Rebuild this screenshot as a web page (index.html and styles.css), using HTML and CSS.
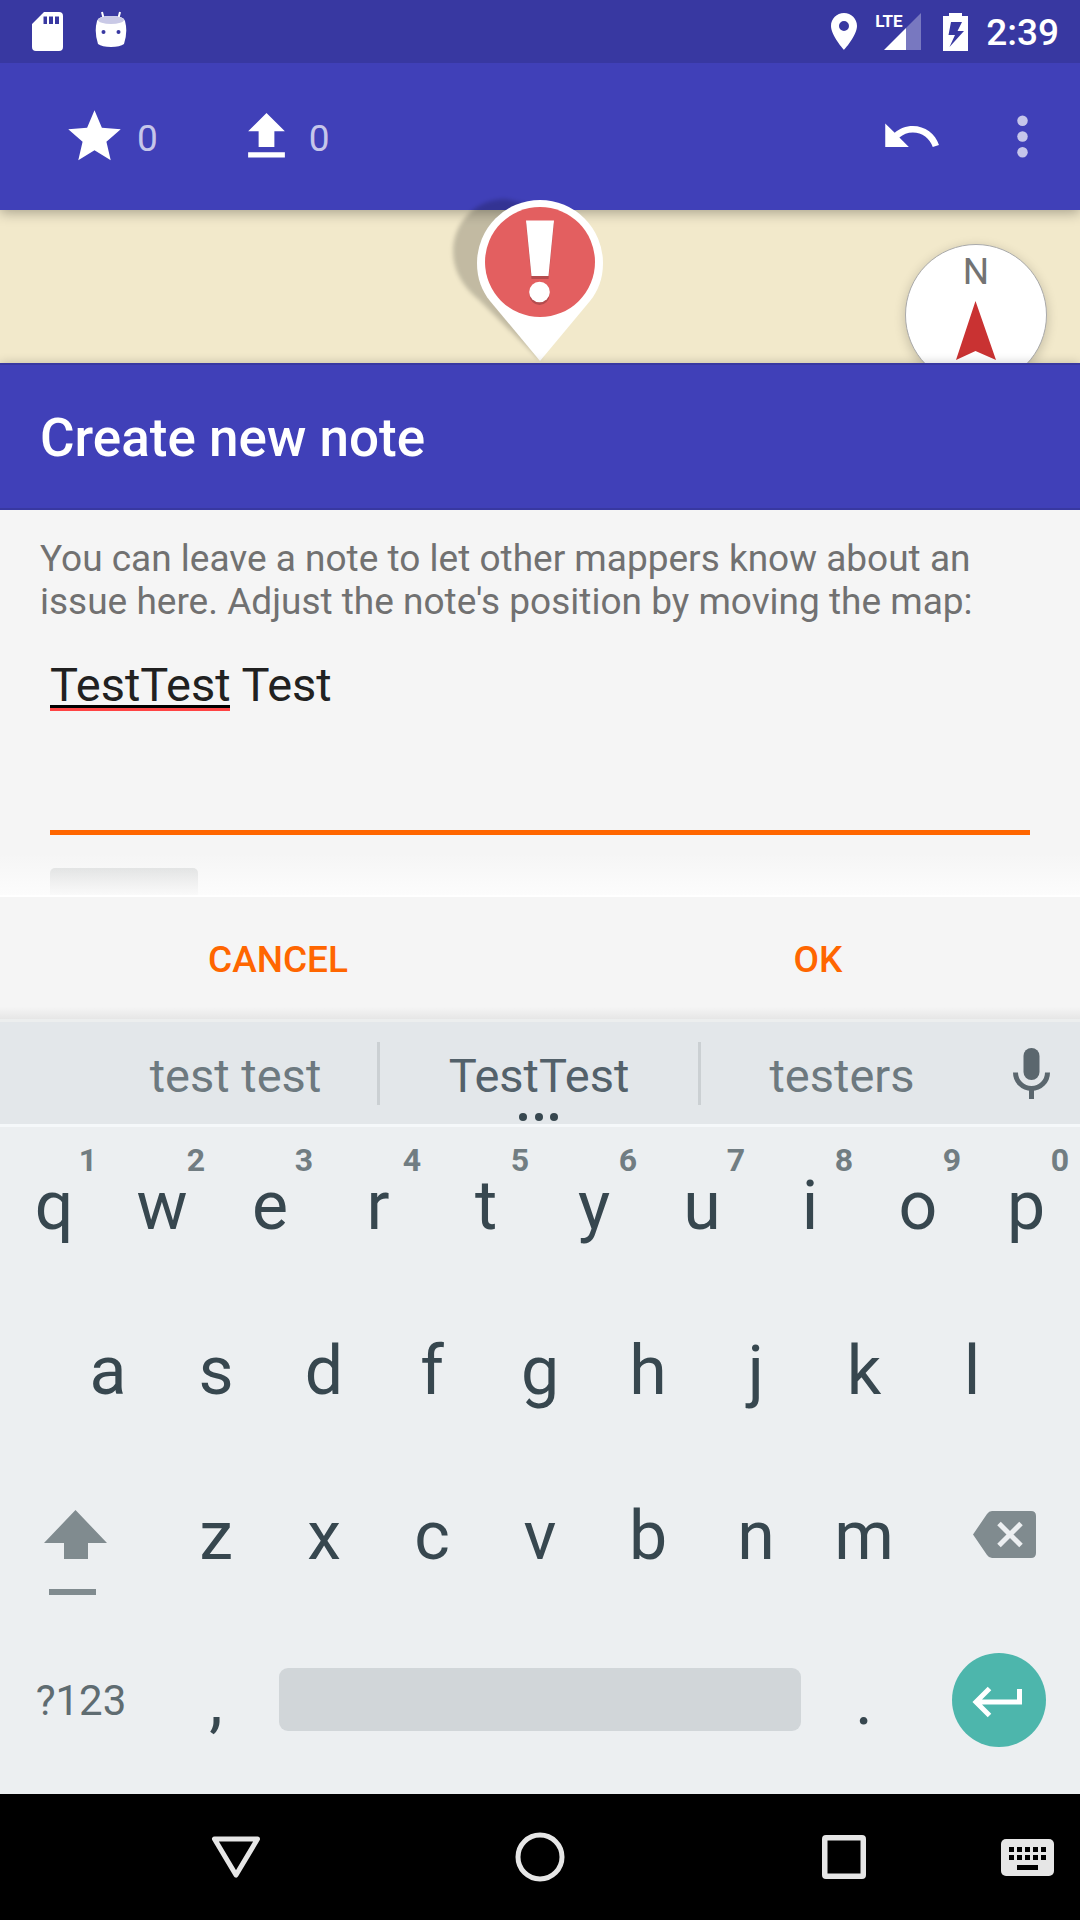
FILE: index.html
```html
<!DOCTYPE html>
<html lang="en">
<head>
<meta charset="utf-8">
<meta name="viewport" content="width=device-width, initial-scale=1">
<title>Create new note</title>
<link rel="stylesheet" href="styles.css">
</head>
<body>
<div class="status">
  <div class="status-group status-left">
    <svg width="31" height="39" viewBox="0 0 31 39"><path fill="#fff" fill-rule="evenodd" d="M12 0H27Q31 0 31 4V35Q31 39 27 39H4Q0 39 0 35V12ZM11.500 4.500V12H15V4.500ZM17 4.500V12H21V4.500ZM23 4.500V12H27V4.500Z"/></svg>
    <svg width="32" height="37" viewBox="0 0 32 37"><path d="M7 1 9 9M25 1 23 9" stroke="#fff" stroke-width="2"/><path fill="#fff" d="M2 10Q3 5 16 5T30 10Q33 21 29 33Q25 36 16 36T3 33Q-1 21 2 10Z"/><ellipse cx="16" cy="9" rx="13" ry="4" fill="#c9c9e6"/><circle cx="8.500" cy="21" r="2" fill="#3838a1"/><circle cx="23.500" cy="21" r="2" fill="#3838a1"/></svg>
  </div>
  <div class="status-group status-right">
    <svg width="26" height="37" viewBox="0 0 26 37"><path fill="#fff" fill-rule="evenodd" d="M13 0C5.800 0 0 5.800 0 13C0 22.500 13 37 13 37S26 22.500 26 13C26 5.800 20.200 0 13 0ZM13 8A5 5 0 1 1 13 18A5 5 0 1 1 13 8Z"/></svg>
    <div class="signal"><span class="lte">LTE</span><svg width="37" height="37" viewBox="0 0 37 37"><path fill="#7878c0" d="M37 0V37H22V15Z"/><path fill="#fff" d="M0 37 22 15V37Z"/></svg></div>
    <svg width="25" height="38" viewBox="0 0 25 38"><path fill="#fff" fill-rule="evenodd" d="M6 0H19V3H25V38H0V3H6ZM8 9 5.500 22H12L6.500 34 21 18H14.500L19 9Z"/></svg>
    <span class="clock">2:39</span>
  </div>
</div>

<header class="toolbar">
  <button class="counter" aria-label="Quests"><svg class="icon" viewBox="0 0 24 24"><path fill="#fff" d="M12 17.270 18.180 21l-1.640-7.030L22 9.240l-7.190-.610L12 2 9.190 8.630 2 9.240l5.460 4.730L5.820 21z"/></svg><span>0</span></button>
  <button class="counter" aria-label="Upload"><svg class="icon" viewBox="0 0 24 24"><path fill="#fff" d="M9 16h6v-6h4l-7-7-7 7h4zm-4 2h14v2H5z"/></svg><span>0</span></button>
  <div class="toolbar-actions">
    <button aria-label="Undo"><svg class="icon" viewBox="0 0 24 24"><path fill="#fff" d="M12.500 8c-2.650 0-5.050.990-6.900 2.600L2 7v9h9l-3.620-3.620c1.390-1.160 3.160-1.880 5.120-1.880 3.540 0 6.550 2.310 7.600 5.500l2.370-.780C21.080 11.030 17.150 8 12.500 8z"/></svg></button>
    <button aria-label="More"><svg class="icon" viewBox="0 0 24 24"><g fill="#c6c6ea"><circle cx="12" cy="6" r="2"/><circle cx="12" cy="12" r="2"/><circle cx="12" cy="18" r="2"/></g></svg></button>
  </div>
</header>

<div class="map">
  <svg class="pin" width="170" height="170" viewBox="0 0 170 170">
    <defs><filter id="soft" x="-20%" y="-20%" width="140%" height="140%"><feGaussianBlur stdDeviation="2"/></filter></defs>
    <path filter="url(#soft)" fill="#000" fill-opacity=".2" d="M100 168 39 108C20 92 13 76 13 58A52 52 0 0 1 66 7L120 20Z"/>
    <path fill="#fff" d="M100 169 50 109C42 99 37 87 37 71A63 63 0 0 1 163 71C163 87 158 99 150 109Z"/>
    <circle cx="100" cy="70" r="55" fill="#e35f60"/>
    <g fill="#b54c4e"><path d="M86 31.500H114L108.500 87H91.500Z"/><circle cx="99.500" cy="103" r="10"/></g>
    <g fill="#fff"><path d="M86 28.500H114L108.500 84H91.500Z"/><circle cx="99.500" cy="100" r="10.300"/></g>
  </svg>
  <button class="compass" aria-label="Compass"><span>N</span><svg width="40" height="59" viewBox="0 0 40 59"><path fill="#c93232" d="M19.500 0 40 59 19.500 50 0 59Z"/></svg></button>
</div>

<section class="dialog">
  <h1>Create new note</h1>
  <div class="dialog-body">
    <label for="note">You can leave a note to let other mappers know about an issue here. Adjust the note's position by moving the map:</label>
    <div class="field"><textarea id="note" spellcheck="false">TestTest Test</textarea><span class="typo"></span></div>
    <div class="attachment"></div>
  </div>
  <div class="dialog-buttons">
    <button>CANCEL</button>
    <button>OK</button>
  </div>
</section>

<section class="keyboard">
  <div class="suggestions">
    <button class="side">test test</button>
    <button class="main">TestTest<svg class="dots" width="40" height="8" viewBox="0 0 40 8"><g fill="#37474f"><circle cx="4" cy="4" r="4"/><circle cx="20" cy="4" r="4"/><circle cx="35" cy="4" r="4"/></g></svg></button>
    <button class="side">testers</button>
    <button class="mic" aria-label="Voice input"><svg width="37" height="51" viewBox="0 0 37 51"><rect x="10.500" width="16" height="32" rx="8" fill="#5b676e"/><path d="M2.500 24.500A16 16 0 0 0 34.500 24.500M18.500 40V51" fill="none" stroke="#5b676e" stroke-width="5"/></svg></button>
  </div>
  <div class="row row-top">
    <button>q<span class="hint">1</span></button><button>w<span class="hint">2</span></button><button>e<span class="hint">3</span></button><button>r<span class="hint">4</span></button><button>t<span class="hint">5</span></button><button>y<span class="hint">6</span></button><button>u<span class="hint">7</span></button><button>i<span class="hint">8</span></button><button>o<span class="hint">9</span></button><button>p<span class="hint">0</span></button>
  </div>
  <div class="row row-home">
    <button>a</button><button>s</button><button>d</button><button>f</button><button>g</button><button>h</button><button>j</button><button>k</button><button>l</button>
  </div>
  <div class="row">
    <button class="wide shift" aria-label="Shift"><svg width="63" height="85" viewBox="0 0 63 85"><path fill="#808b8f" d="M31.500 0 63 33H44V49H20V33H0ZM5 79H52V85H5Z"/></svg></button>
    <button>z</button><button>x</button><button>c</button><button>v</button><button>b</button><button>n</button><button>m</button>
    <button class="wide delete" aria-label="Delete"><svg width="63" height="47" viewBox="0 0 63 47"><path fill="#808b8f" d="M19 0H58Q63 0 63 5V42Q63 47 58 47H19Q16 47 14 44L0 23.500 14 3Q16 0 19 0Z"/><path d="M26 12.500 48 34.500M48 12.500 26 34.500" stroke="#eceff1" stroke-width="5"/></svg></button>
  </div>
  <div class="row">
    <button class="wide symbols">?123</button>
    <button>,</button>
    <button class="space" aria-label="Space"><span></span></button>
    <button>.</button>
    <button class="wide enter" aria-label="Enter"><svg width="94" height="94" viewBox="0 0 94 94"><circle cx="47" cy="47" r="47" fill="#4db6ac"/><path d="M37.500 35.500 24 49 37.500 62.500M25 49H67.500V36" fill="none" stroke="#fff" stroke-width="5"/></svg></button>
  </div>
</section>

<nav class="navbar">
  <button class="back" aria-label="Back"><svg width="50" height="44" viewBox="0 0 50 44"><path d="M3.500 4H46.500L25 40Z" fill="none" stroke="#e6e6e6" stroke-width="5" stroke-linejoin="round"/></svg></button>
  <button aria-label="Home"><svg width="50" height="50" viewBox="0 0 50 50"><circle cx="25" cy="25" r="22" fill="none" stroke="#e6e6e6" stroke-width="5"/></svg></button>
  <button aria-label="Recent apps"><svg width="44" height="44" viewBox="0 0 44 44"><path fill="#e6e6e6" fill-rule="evenodd" d="M4 0H40Q44 0 44 4V40Q44 44 40 44H4Q0 44 0 40V4Q0 0 4 0ZM5.500 5.500V38.500H38.500V5.500Z"/></svg></button>
  <button class="ime" aria-label="Choose keyboard"><svg width="53" height="37" viewBox="0 0 53 37"><rect width="53" height="37" rx="5" fill="#e6e6e6"/><path d="M8 10.500H46M8 18.500H46" stroke="#000" stroke-width="5" stroke-dasharray="5 3"/><path d="M16 28.500H37" stroke="#000" stroke-width="5"/></svg></button>
</nav>
</body>
</html>
```
FILE: styles.css
```css
* { box-sizing: border-box; }

body {
  margin: 0;
  min-height: 100vh;
  display: flex;
  flex-direction: column;
  font-family: Roboto, "Liberation Sans", sans-serif;
  background: #000;
  overflow-x: hidden;
}

button {
  border: 0;
  padding: 0;
  margin: 0;
  background: none;
  font: inherit;
  color: inherit;
}

svg { display: block; flex: none; }

/* Status bar */
.status {
  position: relative;
  z-index: 2;
  display: flex;
  justify-content: space-between;
  height: 63px;
  padding: 0 21px 0 32px;
  background: #3838a1;
  color: #fff;
}
.status-group { display: flex; align-items: center; }
.status-left { gap: 32px; }
.status-left svg:last-child { margin-bottom: 4px; }
.status-right { gap: 18px; }
.signal { position: relative; padding-left: 9px; }
.lte {
  position: absolute;
  left: 0;
  top: 0;
  font: bold 17px/17px "Liberation Sans Narrow", Roboto, sans-serif;
}
.signal + svg { margin-left: 4px; }
.clock { padding-top: 2px; font-size: 37px; font-weight: 500; }

/* Toolbar */
.toolbar {
  position: relative;
  z-index: 1;
  display: flex;
  align-items: center;
  gap: 77px;
  height: 147px;
  padding: 0 26px 0 63px;
  background: #4040b8;
  box-shadow: 0 3px 12px rgba(0, 0, 0, .3);
}
.icon { width: 63px; height: 63px; }
.counter {
  display: flex;
  align-items: center;
  gap: 11px;
  font-size: 37px;
  color: #c6c6ea;
}
.counter span { padding-top: 4px; }
.toolbar-actions { display: flex; gap: 48px; margin-left: auto; }

/* Map */
.map {
  position: relative;
  flex: 1;
  min-height: 153px;
  background: #f2e9cb;
}
.pin {
  position: absolute;
  z-index: 2;
  left: 50%;
  bottom: 1px;
  margin-left: -100px;
}
.compass {
  position: absolute;
  top: 34px;
  right: 33px;
  display: flex;
  flex-direction: column;
  align-items: center;
  gap: 8px;
  width: 142px;
  height: 142px;
  padding-top: 5px;
  border: 1px solid #aaa;
  border-radius: 50%;
  background: #fff;
  box-shadow: 0 3px 12px rgba(0, 0, 0, .2);
  font-size: 37px;
  line-height: 43px;
  color: #737373;
}

/* Dialog */
.dialog {
  position: relative;
  z-index: 3;
  background: #f5f5f5;
  box-shadow: 0 0 10px rgba(0, 0, 0, .2);
}
.dialog h1 {
  margin: 0;
  padding: 4px 40px 0;
  border: solid #3838a1;
  border-width: 2px 0;
  background: #4040b8;
  color: #fff;
  font-size: 53px;
  font-weight: 500;
  line-height: 139px;
}
.dialog-body {
  position: relative;
  padding: 27px 50px 0;
}
.dialog-body::after {
  content: "";
  position: absolute;
  left: 0;
  right: 0;
  bottom: 0;
  height: 42px;
  border-bottom: 2px solid #fff;
  background: linear-gradient(rgba(255, 255, 255, 0), rgba(253, 253, 253, .9));
}
.dialog-body label {
  display: block;
  margin: 0 -10px 34px;
  font-size: 37px;
  line-height: 43px;
  color: #717171;
}
.field { position: relative; }
.field textarea {
  display: block;
  width: 100%;
  height: 178px;
  padding: 0;
  border: 0;
  border-bottom: 5px solid #ff6600;
  outline: 0;
  resize: none;
  background: none;
  font: 47px/55px Roboto, "Liberation Sans", sans-serif;
  color: #212121;
}
.typo {
  position: absolute;
  left: 0;
  top: 48px;
  width: 180px;
  height: 6px;
  border-top: 3px solid #000;
  border-bottom: 3px solid #ff4444;
}
.attachment {
  width: 148px;
  height: 29px;
  margin-top: 33px;
  border-radius: 5px 5px 0 0;
  background: linear-gradient(#d6d8d8, #dcdcdc);
}
.dialog-buttons {
  display: flex;
  height: 122px;
  background: linear-gradient(#f5f5f5 90%, #e6e6e6);
  font-size: 37px;
  font-weight: 500;
  color: #ff6600;
}
.dialog-buttons button { flex: 1; padding: 2px 0 0 16px; }

/* Keyboard */
.keyboard {
  position: relative;
  z-index: 4;
  padding-bottom: 12px;
  background: #eceff1;
  color: #37474f;
}
.suggestions {
  display: grid;
  grid-template-columns: 283fr 324fr 282fr 97fr;
  align-items: center;
  height: 108px;
  padding-left: 94px;
  border-top: 3px solid #eceeee;
  border-bottom: 3px solid #f5f8fa;
  background: #e3e7ea;
  font-size: 47px;
}
.side { padding-top: 4px; color: #6d797f; }
.main {
  position: relative;
  height: 63px;
  padding-top: 4px;
  border: solid #cbd0d3;
  border-width: 0 3px;
  color: #53616a;
}
.dots {
  position: absolute;
  left: calc(50% - 20px);
  bottom: -16px;
}
.mic { display: grid; place-items: center; }

.row {
  display: grid;
  grid-template-columns: repeat(20, minmax(0, 1fr));
  height: 165px;
}
.row-top { height: 160px; }
.row button {
  position: relative;
  display: flex;
  grid-column-end: span 2;
  justify-content: center;
  align-items: flex-end;
  padding-bottom: 41px;
  font-size: 68px;
  line-height: 80px;
}
.row-home button:first-child { grid-column-start: 2; }
.row .wide { grid-column-end: span 3; }
.hint {
  position: absolute;
  right: 11px;
  top: 15px;
  font-size: 32px;
  font-weight: 700;
  line-height: 36px;
  color: #717d82;
}
.row .shift { justify-content: flex-start; padding: 0 0 22px 44px; }
.row .delete { justify-content: flex-end; padding: 0 44px 59px 0; }
.row .symbols {
  padding-bottom: 56px;
  font-size: 42px;
  line-height: 50px;
  color: #5f6c71;
}
.row .space { grid-column-end: span 10; padding: 0 9px 51px; }
.space span {
  flex: 1;
  height: 63px;
  border-radius: 9px;
  background: #d1d6d9;
}
.row .enter { padding-bottom: 35px; }

/* Navigation bar */
.navbar {
  display: grid;
  grid-template-columns: 304fr 304fr 304fr 84fr;
  height: 126px;
  padding-left: 84px;
  background: #000;
}
.navbar button { display: grid; place-items: center; }
.navbar .ime { justify-items: start; padding-left: 5px; }
```
